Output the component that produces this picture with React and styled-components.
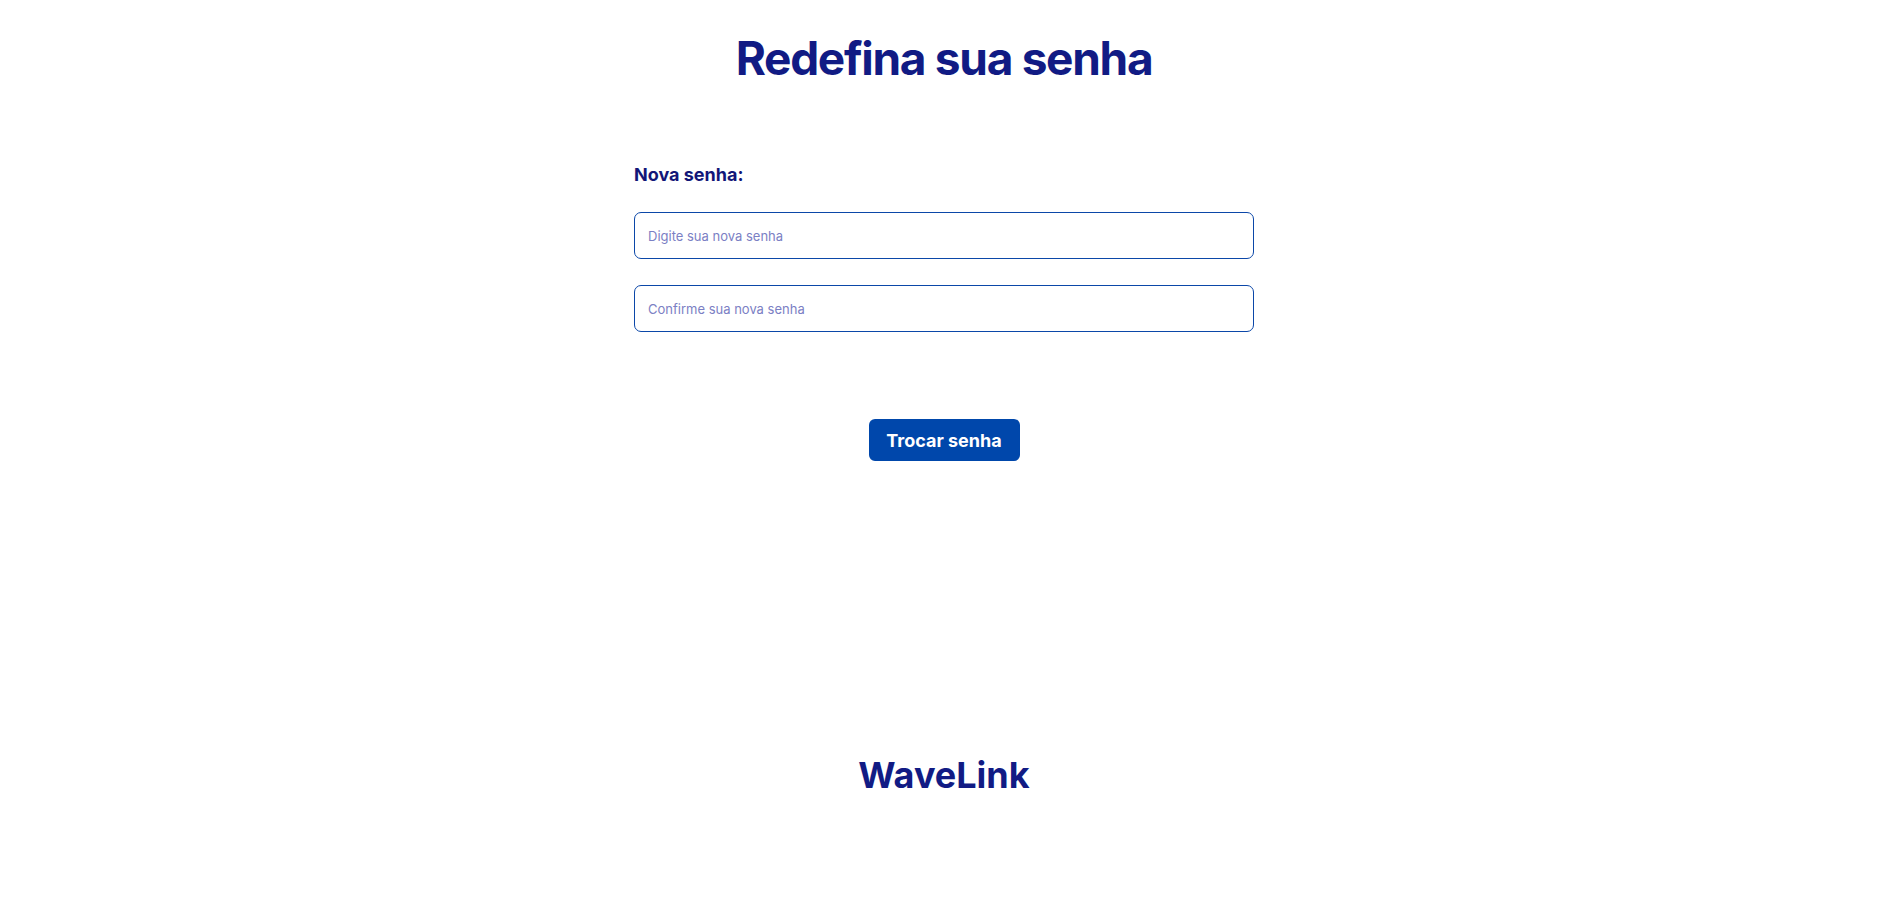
import styled, { createGlobalStyle } from "styled-components";

const GlobalStyle = createGlobalStyle`
  body {
    margin: 0;
    background: #ffffff;
    font-family: "Inter", "Liberation Sans", sans-serif;
  }
`;

const Pagina = styled.div`
  min-height: 100vh;
  display: flex;
  flex-direction: column;
  align-items: center;
`;

const Titulo = styled.h1`
  margin: 30px 0 0;
  font-size: 46px;
  line-height: 56px;
  font-weight: 700;
  letter-spacing: -1.3px;
  color: #111b84;
`;

const Formulario = styled.form`
  width: 620px;
  margin-top: 77px;
  display: flex;
  flex-direction: column;
`;

const Label = styled.label`
  font-size: 18px;
  font-weight: 700;
  color: #121678;
  line-height: 24px;
  margin-bottom: 25px;
`;

const Campo = styled.input`
  box-sizing: border-box;
  width: 100%;
  height: 47px;
  padding: 0 13px;
  border: 1px solid #0b47a8;
  border-radius: 7px;
  font-family: inherit;
  font-size: 13px;
  color: #121678;
  margin-bottom: ${(p) => (p.$ultimo ? "0" : "26px")};
  outline: none;

  &::placeholder {
    color: #7b80c4;
  }
`;

const Botao = styled.button`
  align-self: center;
  margin-top: 87px;
  width: 151px;
  height: 42px;
  border: none;
  border-radius: 6px;
  background: #0047ab;
  color: #ffffff;
  font-family: inherit;
  font-size: 18px;
  font-weight: 700;
  cursor: pointer;
`;

const Rodape = styled.footer`
  margin-top: auto;
  padding-bottom: 113px;
  font-size: 36px;
  font-weight: 700;
  color: #111b84;
`;

function App() {
  return (
    <>
      <GlobalStyle />
      <Pagina>
        <Titulo>Redefina sua senha</Titulo>
        <Formulario onSubmit={(e) => e.preventDefault()}>
          <Label htmlFor="nova">Nova senha:</Label>
          <Campo id="nova" type="password" placeholder="Digite sua nova senha" />
          <Campo type="password" placeholder="Confirme sua nova senha" $ultimo />
          <Botao type="submit">Trocar senha</Botao>
        </Formulario>
        <Rodape>WaveLink</Rodape>
      </Pagina>
    </>
  );
}

export default App;
